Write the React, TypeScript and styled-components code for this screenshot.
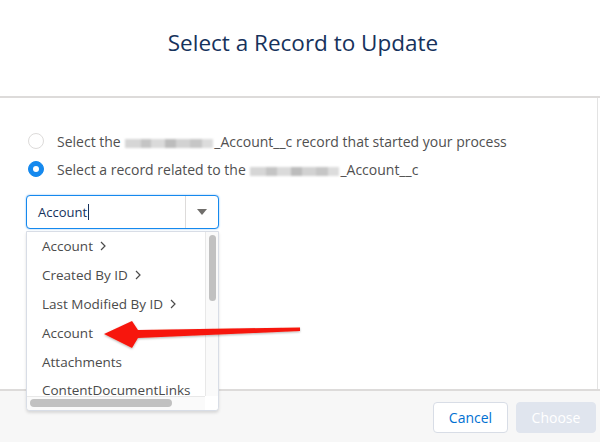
import React from "react";
import styled, { createGlobalStyle } from "styled-components";

const Global = createGlobalStyle`
  html, body { margin: 0; padding: 0; background: #ffffff; }
  body { font-family: "Open Sans", "Noto Sans", Arial, sans-serif; -webkit-font-smoothing: antialiased; }
  * { box-sizing: border-box; }
`;

const Page = styled.div`
  position: relative;
  width: 600px;
  height: 442px;
  overflow: hidden;
  display: flex;
  flex-direction: column;
  background: #ffffff;
`;

const Header = styled.header`
  height: 98px;
  border-bottom: 2px solid #dddbda;
  padding-top: 27px;
  text-align: center;
`;

const Title = styled.h2`
  margin: 0 0 0 6px;
  font-size: 22.5px;
  line-height: 32px;
  font-weight: 400;
  color: #16325c;
`;

const Body = styled.section`
  height: 291px;
  margin-right: 2px;
  border-right: 1px solid #e3e3e3;
  padding: 35px 0 0 28px;
  display: flex;
  flex-direction: column;
  gap: 12px;
`;

const RadioRow = styled.label`
  display: flex;
  align-items: center;
  gap: 13px;
  height: 16px;
  font-size: 14px;
  color: #505050;
  white-space: nowrap;
`;

const Radio = styled.span<{ $on?: boolean }>`
  width: 16px;
  height: 16px;
  border-radius: 50%;
  flex: none;
  display: flex;
  align-items: center;
  justify-content: center;
  border: 1px solid ${(p) => (p.$on ? "#1589ee" : "#dddbda")};
  background: ${(p) => (p.$on ? "#1589ee" : "#ffffff")};
  &::after {
    content: "";
    width: 6px;
    height: 6px;
    border-radius: 50%;
    background: #ffffff;
    display: ${(p) => (p.$on ? "block" : "none")};
  }
`;

const Blur = styled.span<{ $w: number }>`
  display: inline-block;
  width: ${(p) => p.$w}px;
  height: 9px;
  margin: 0 1px;
  vertical-align: -1px;
  background: linear-gradient(90deg, #d6d6d6 0 18%, #c4c4c4 18% 30%, #dadada 30% 46%, #bcbcbc 46% 58%, #d2d2d2 58% 74%, #c6c6c6 74% 88%, #dcdcdc 88%);
  filter: blur(1.2px);
`;

const ComboWrap = styled.div`
  position: relative;
  width: 193px;
  margin-top: 6px;
  margin-left: -2px;
`;

const Combo = styled.div`
  height: 34px;
  display: flex;
  border: 1px solid #1589ee;
  border-radius: 4px;
  box-shadow: 0 0 2px #7fb7f0;
  background: #fff;
`;

const InputText = styled.div`
  flex: 1;
  display: flex;
  align-items: center;
  padding-left: 11px;
  font-size: 13px;
  color: #16325c;
`;

const Caret = styled.span`
  width: 1px;
  height: 16px;
  background: #16325c;
  margin-left: 1px;
`;

const Toggle = styled.div`
  width: 33px;
  border-left: 1px solid #dddbda;
  display: flex;
  align-items: center;
  justify-content: center;
`;

const Listbox = styled.div`
  position: absolute;
  top: 36px;
  left: 0;
  width: 193px;
  height: 180px;
  border: 1px solid #d8dde6;
  border-radius: 0 0 4px 4px;
  background: #fff;
  box-shadow: 0 2px 3px rgba(0, 0, 0, 0.12);
  display: grid;
  grid-template-columns: 1fr 13px;
  grid-template-rows: 1fr 14px;
  overflow: hidden;
  z-index: 2;
`;

const Viewport = styled.ul`
  margin: 0;
  padding: 0;
  list-style: none;
  overflow: hidden;
`;

const Item = styled.li`
  height: 28.8px;
  display: flex;
  align-items: center;
  gap: 7px;
  padding-left: 15px;
  font-size: 13.5px;
  color: #4b4b4b;
  white-space: nowrap;
`;

const VTrack = styled.div`
  background: #fafafa;
  border-left: 1px solid #e8e8e8;
  padding: 3px 0 0 3px;
`;

const VThumb = styled.div`
  width: 7px;
  height: 66px;
  border-radius: 4px;
  background: #c1c1c1;
`;

const HTrack = styled.div`
  background: #fafafa;
  border-top: 1px solid #e8e8e8;
  padding: 2px 0 0 3px;
`;

const HThumb = styled.div`
  width: 142px;
  height: 8px;
  border-radius: 4px;
  background: #c1c1c1;
`;

const Corner = styled.div`
  background: #ffffff;
`;

const Footer = styled.footer`
  flex: 1;
  border-top: 2px solid #dddbda;
  background: #f7f7f7;
  display: flex;
  justify-content: flex-end;
  align-items: flex-start;
  gap: 8px;
  padding: 11px 4px 0 0;
`;

const Button = styled.button<{ $brand?: boolean }>`
  height: 31px;
  padding: 0;
  width: ${(p) => (p.$brand ? "80px" : "75px")};
  border-radius: 4px;
  font-family: inherit;
  font-size: 14px;
  border: 1px solid ${(p) => (p.$brand ? "#e0e5ee" : "#d8dde6")};
  background: ${(p) => (p.$brand ? "#e0e5ee" : "#ffffff")};
  color: ${(p) => (p.$brand ? "#ffffff" : "#0070d2")};
`;

const Annotation = styled.svg`
  position: absolute;
  left: 0;
  top: 0;
  pointer-events: none;
  z-index: 5;
`;

const Chevron = () => (
  <svg width="6" height="10" viewBox="0 0 6 10">
    <path d="M1 1 L5 5 L1 9" fill="none" stroke="#4b4b4b" strokeWidth="1.2" />
  </svg>
);

const items: { label: string; more?: boolean }[] = [
  { label: "Account", more: true },
  { label: "Created By ID", more: true },
  { label: "Last Modified By ID", more: true },
  { label: "Account" },
  { label: "Attachments" },
  { label: "ContentDocumentLinks" },
];

export default function App() {
  return (
    <>
      <Global />
      <Page>
        <Header>
          <Title>Select a Record to Update</Title>
        </Header>
        <Body>
          <RadioRow>
            <Radio />
            <span>
              Select the <Blur $w={88} />_Account__c record that started your process
            </span>
          </RadioRow>
          <RadioRow>
            <Radio $on />
            <span>
              Select a record related to the <Blur $w={89} />_Account__c
            </span>
          </RadioRow>
          <ComboWrap>
            <Combo>
              <InputText>
                Account
                <Caret />
              </InputText>
              <Toggle>
                <svg width="10" height="6" viewBox="0 0 10 6">
                  <path d="M0 0 H10 L5 6 Z" fill="#706e6b" />
                </svg>
              </Toggle>
            </Combo>
            <Listbox>
              <Viewport>
                {items.map((it, i) => (
                  <Item key={i}>
                    {it.label}
                    {it.more && <Chevron />}
                  </Item>
                ))}
              </Viewport>
              <VTrack>
                <VThumb />
              </VTrack>
              <HTrack>
                <HThumb />
              </HTrack>
              <Corner />
            </Listbox>
          </ComboWrap>
        </Body>
        <Footer>
          <Button>Cancel</Button>
          <Button $brand>Choose</Button>
        </Footer>
        <Annotation width="600" height="442" viewBox="0 0 600 442">
          <defs>
            <filter id="sh" x="-10%" y="-50%" width="120%" height="200%">
              <feDropShadow dx="0" dy="1" stdDeviation="0.8" floodColor="#000" floodOpacity="0.3" />
            </filter>
          </defs>
          <polygon
            points="104,334 132,321 138,330 300,327.5 300,331 138,338 132,348"
            fill="#f7190c"
            filter="url(#sh)"
          />
        </Annotation>
      </Page>
    </>
  );
}
